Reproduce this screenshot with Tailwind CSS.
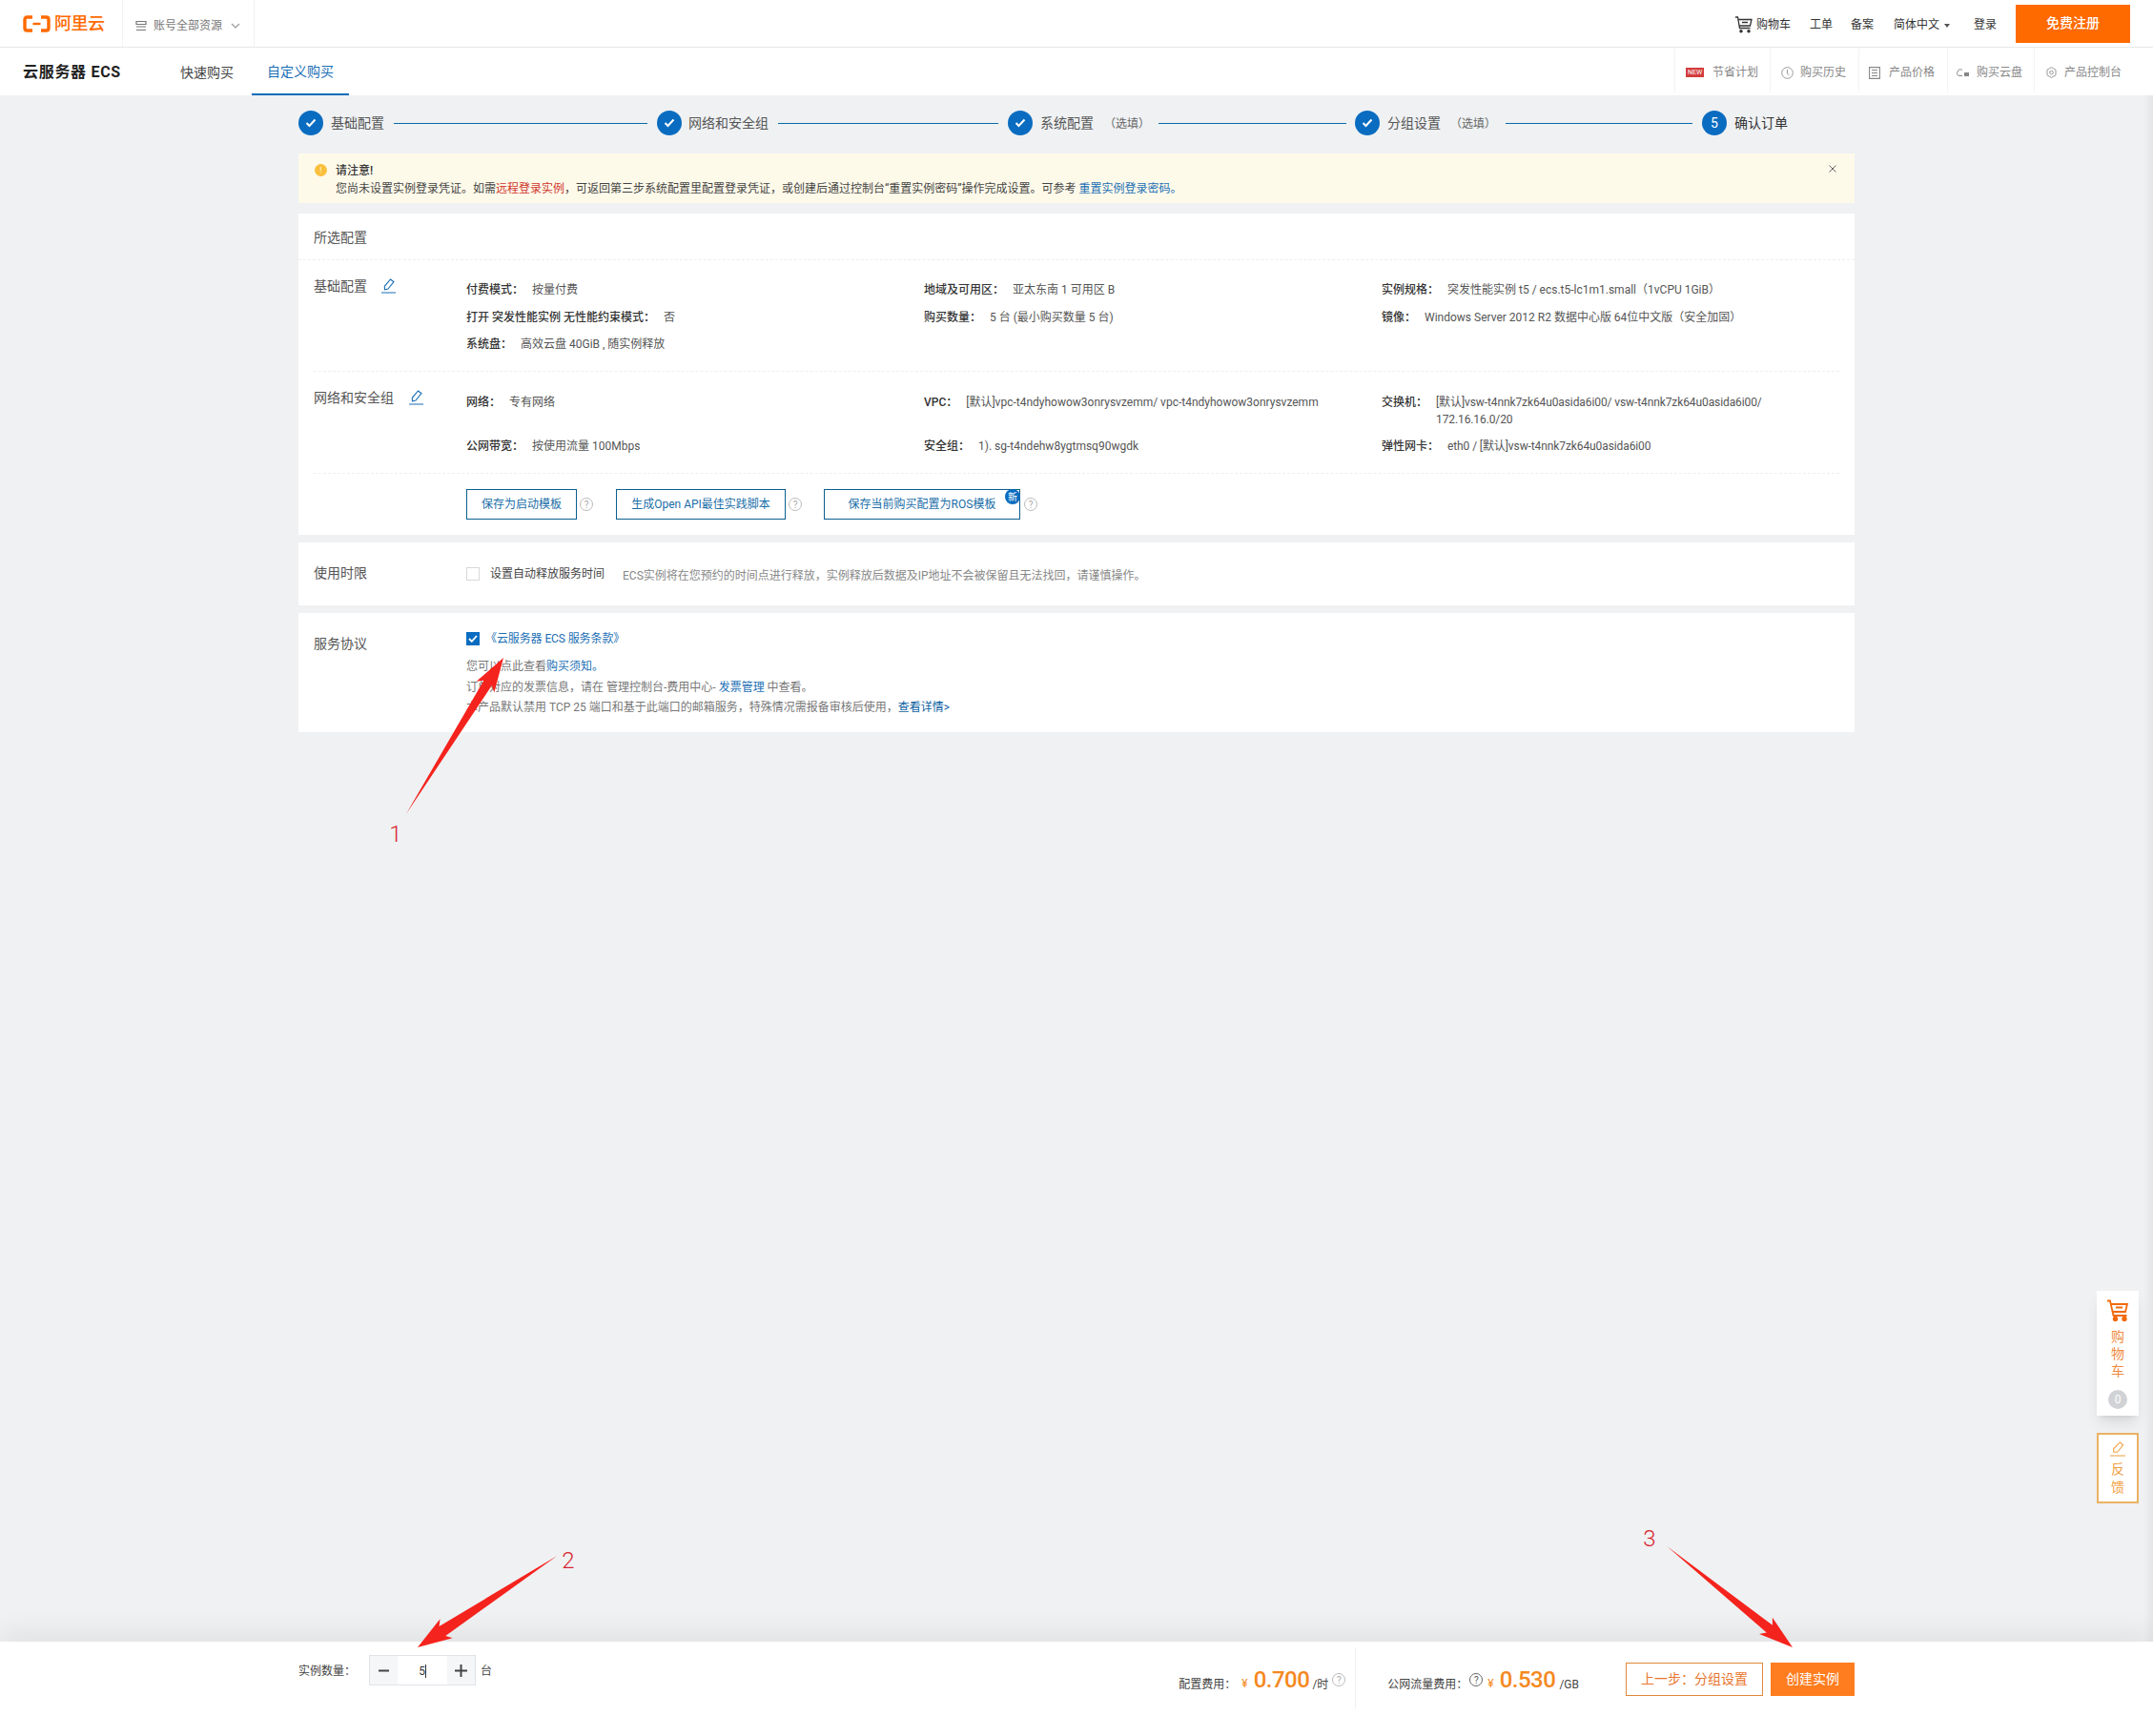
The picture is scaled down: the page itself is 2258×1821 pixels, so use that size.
<!DOCTYPE html>
<html lang="zh-CN">
<head>
    <meta charset="UTF-8">
    <title>云服务器 ECS - 确认订单</title>
    <script src="https://cdn.jsdelivr.net/npm/@tailwindcss/browser@4"></script>
</head>
<body class="relative flex h-[1821px] w-[2258px] flex-col overflow-hidden bg-[#eff1f3] font-['Roboto','Noto_Sans_CJK_SC',sans-serif] text-[12px] text-[#555]">

    <!-- Top bar -->
    <header class="flex h-[50px] shrink-0 items-stretch border-b border-[#e8e8e8] bg-white">
        <div class="flex w-[128px] items-center pl-[24px] text-[#ff6a00]">
            <svg class="h-[18px] w-[29px]" viewBox="0 0 29 18" fill="none" stroke="currentColor" stroke-width="3.4">
                <path d="M10 2H4.5Q2 2 2 4.5v9Q2 16 4.500 16H10"/>
                <path d="M19 2h5.500Q27 2 27 4.500v9Q27 16 24.500 16H19"/>
                <path d="M10.500 9h8" stroke-width="2.400"/>
            </svg>
            <span class="ml-[4px] text-[18px] leading-none font-medium tracking-[-0.5px] whitespace-nowrap">阿里云</span>
        </div>
        <div class="flex w-[139px] items-center border-x border-[#f2f2f2] pt-[4px] pl-[13px] text-[#777]">
            <svg class="h-[12px] w-[12px]" viewBox="0 0 12 12" fill="none" stroke="#777" stroke-width="1.200"><path d="M1 1.500h10v3H1zM1 7h10M1 10.500h10"/></svg>
            <span class="ml-[7px] whitespace-nowrap">账号全部资源</span>
            <svg class="ml-[9px] h-[6px] w-[10px]" viewBox="0 0 10 6" fill="none" stroke="#999" stroke-width="1.200"><path d="M1 1l4 4 4-4"/></svg>
        </div>
        <div class="ml-auto flex items-center pt-[2px] pr-[24px] text-[#333]">
            <svg class="h-[18px] w-[19px]" viewBox="0 0 19 18" fill="none" stroke="#333" stroke-width="1.300">
                <path d="M1 1h2.500l2 11.500h11M4 3.500h14l-1.500 6.500H5.200M8 6.500h6"/>
                <circle cx="7" cy="15.800" r="1.100" fill="#333"/><circle cx="15" cy="15.800" r="1.100" fill="#333"/>
            </svg>
            <span class="ml-[4px]">购物车</span>
            <span class="ml-[20px]">工单</span>
            <span class="ml-[19px]">备案</span>
            <span class="ml-[21px]">简体中文</span>
            <span class="mt-[2px] ml-[5px] h-0 w-0 border-x-[3px] border-t-[4px] border-x-transparent border-t-[#555]"></span>
            <span class="ml-[25px]">登录</span>
            <span class="mb-[2px] ml-[20px] flex h-[40px] w-[120px] items-center justify-center bg-[#ff6a00] text-[14px] font-medium text-white">免费注册</span>
        </div>
    </header>

    <!-- Product nav -->
    <nav class="flex h-[50px] shrink-0 items-stretch bg-white">
        <div class="flex w-[189px] items-center pt-[2px] pl-[24px] text-[16px] font-bold tracking-[0.7px] whitespace-nowrap text-[#222]">云服务器 ECS</div>
        <div class="flex items-center pt-[2px] text-[14px] text-[#444]">快速购买</div>
        <div class="ml-[19px] flex w-[102px] items-center justify-center border-b-2 border-[#0a6cb8] pt-[3px] text-[14px] text-[#1a6fb5]">自定义购买</div>
        <div class="mb-[3px] ml-auto flex items-stretch text-[#888]">
            <div class="flex w-[100px] items-center border-l border-[#f3f3f3] pt-[5px] pl-[11px]">
                <span class="flex h-[10px] w-[19px] items-center justify-center bg-[#d23c3c] text-[7px] leading-none text-white">NEW</span>
                <span class="ml-[9px]">节省计划</span>
            </div>
            <div class="flex w-[93px] items-center border-l border-[#f3f3f3] pt-[5px] pl-[11px]">
                <svg class="h-[13px] w-[13px]" viewBox="0 0 13 13" fill="none" stroke="#999"><circle cx="6.500" cy="6.500" r="5.800"/><path d="M6.500 3v4l2 2"/></svg>
                <span class="ml-[7px]">购买历史</span>
            </div>
            <div class="flex w-[93px] items-center border-l border-[#f3f3f3] pt-[5px] pl-[10px]">
                <svg class="h-[13px] w-[12px]" viewBox="0 0 12 13" fill="none" stroke="#888" stroke-width="1.100"><path d="M.600.600h10.800v11.800H.600zM3 3.500h6M3 6.500h6M3 9.500h6"/></svg>
                <span class="ml-[9px]">产品价格</span>
            </div>
            <div class="flex w-[91px] items-center border-l border-[#f3f3f3] pt-[5px] pl-[9px]">
                <svg class="h-[10px] w-[13px]" viewBox="0 0 13 10" fill="none" stroke="#888"><path d="M6 2.500A3 3 0 0 0 1 4.500 2.500 2.500 0 0 0 3 8.500h3"/><path d="M8 5h5v4H8z" fill="#888" stroke="none"/></svg>
                <span class="ml-[8px]">购买云盘</span>
            </div>
            <div class="flex w-[125px] items-center border-l border-[#f3f3f3] pt-[5px] pl-[12px]">
                <svg class="h-[12px] w-[11px]" viewBox="0 0 11 12" fill="none" stroke="#999"><path d="M5.500.600l4.500 2.600v5.600l-4.500 2.600L1 8.800V3.200z"/><circle cx="5.500" cy="6" r="1.800"/></svg>
                <span class="ml-[8px]">产品控制台</span>
            </div>
        </div>
    </nav>

    <!-- Main column -->
    <main class="relative flex-1">
        <div class="absolute inset-y-0 right-0 w-[10px] bg-linear-to-r from-transparent to-black/5"></div>
        <div class="ml-[313px] w-[1632px]">

            <!-- Steps -->
            <div class="mt-[16px] flex h-[26px] items-center text-[14px] text-[#555]">
                <span class="flex h-[26px] w-[26px] shrink-0 items-center justify-center rounded-full bg-[#0a6cc0]"><svg class="h-[10px] w-[12px]" viewBox="0 0 12 10" fill="none" stroke="white" stroke-width="2"><path d="M1.500 5l3 3 6-6.500"/></svg></span>
                <span class="ml-[8px] whitespace-nowrap">基础配置</span>
                <span class="ml-[10px] h-px w-[266px] bg-[#0b6aa8]"></span>
                <span class="ml-[10px] flex h-[26px] w-[26px] shrink-0 items-center justify-center rounded-full bg-[#0a6cc0]"><svg class="h-[10px] w-[12px]" viewBox="0 0 12 10" fill="none" stroke="white" stroke-width="2"><path d="M1.500 5l3 3 6-6.500"/></svg></span>
                <span class="ml-[7px] whitespace-nowrap">网络和安全组</span>
                <span class="ml-[10px] h-px w-[231px] bg-[#0b6aa8]"></span>
                <span class="ml-[10px] flex h-[26px] w-[26px] shrink-0 items-center justify-center rounded-full bg-[#0a6cc0]"><svg class="h-[10px] w-[12px]" viewBox="0 0 12 10" fill="none" stroke="white" stroke-width="2"><path d="M1.500 5l3 3 6-6.500"/></svg></span>
                <span class="ml-[8px] whitespace-nowrap">系统配置</span>
                <span class="mt-[2px] ml-[11px] text-[12px] whitespace-nowrap text-[#666]">（选填）</span>
                <span class="ml-[9px] h-px w-[197px] bg-[#0b6aa8]"></span>
                <span class="ml-[9px] flex h-[26px] w-[26px] shrink-0 items-center justify-center rounded-full bg-[#0a6cc0]"><svg class="h-[10px] w-[12px]" viewBox="0 0 12 10" fill="none" stroke="white" stroke-width="2"><path d="M1.500 5l3 3 6-6.500"/></svg></span>
                <span class="ml-[8px] whitespace-nowrap">分组设置</span>
                <span class="mt-[2px] ml-[10px] text-[12px] whitespace-nowrap text-[#666]">（选填）</span>
                <span class="ml-[10px] h-px w-[196px] bg-[#0b6aa8]"></span>
                <span class="ml-[10px] flex h-[26px] w-[26px] shrink-0 items-center justify-center rounded-full bg-[#0a6cc0] text-[14px] text-white">5</span>
                <span class="ml-[8px] whitespace-nowrap text-[#333]">确认订单</span>
            </div>

            <!-- Notice -->
            <div class="relative mt-[19px] h-[52px] bg-[#fefaea] pt-[9px] pl-[39px] leading-[18px] text-[#444]">
                <span class="absolute top-[11px] left-[17px] flex h-[13px] w-[13px] items-center justify-center rounded-full bg-[#fabf3c] text-[9px] text-[#fff3d0]">!</span>
                <svg class="absolute top-[12px] right-[19px] h-[8px] w-[8px]" viewBox="0 0 8 8" fill="none" stroke="#666"><path d="M.5.5l7 7M7.500.5l-7 7"/></svg>
                <div class="font-medium text-[#333]">请注意!</div>
                <div class="mt-px">您尚未设置实例登录凭证。如需<span class="text-[#d0342c]">远程登录实例</span>，可返回第三步系统配置里配置登录凭证，或创建后通过控制台“重置实例密码”操作完成设置。可参考 <span class="text-[#1a6fb5]">重置实例登录密码。</span></div>
            </div>

            <!-- Selected config -->
            <section class="mt-[11px] h-[337px] bg-white">
                <div class="flex h-[49px] items-center border-b border-dashed border-[#eee] pt-[2px] pl-[16px] text-[14px] text-[#555]">所选配置</div>
                <div class="px-[16px]">
                    <div class="flex border-b border-dashed border-[#eee] pt-[21px] pb-[18px]">
                        <div class="-mt-[4px] flex h-[20px] w-[160px] items-center text-[14px]">基础配置
                            <svg class="ml-[15px] h-[16px] w-[15px]" viewBox="0 0 15 16" fill="none" stroke="#1a6fb5" stroke-width="1.100"><path d="M9.500 1l3.500 2.700-6 7.300-3.500.8-.2-3.500zM0 15h15"/></svg>
                        </div>
                        <div class="grid w-[1440px] grid-cols-3 gap-y-[8.500px] leading-[20px]">
                            <div><b class="font-medium text-[#333]">付费模式：</b><span class="ml-[9px]">按量付费</span></div>
                            <div><b class="font-medium text-[#333]">地域及可用区：</b><span class="ml-[9px]">亚太东南 1 可用区 B</span></div>
                            <div><b class="font-medium text-[#333]">实例规格：</b><span class="ml-[9px]">突发性能实例 t5 / ecs.t5-lc1m1.small（1vCPU 1GiB）</span></div>
                            <div><b class="font-medium text-[#333]">打开 突发性能实例 无性能约束模式：</b><span class="ml-[9px]">否</span></div>
                            <div><b class="font-medium text-[#333]">购买数量：</b><span class="ml-[9px]">5 台 (最小购买数量 5 台)</span></div>
                            <div><b class="font-medium text-[#333]">镜像：</b><span class="ml-[9px]">Windows Server 2012 R2 数据中心版 64位中文版（安全加固）</span></div>
                            <div class="col-span-3"><b class="font-medium text-[#333]">系统盘：</b><span class="ml-[9px]">高效云盘 40GiB , 随实例释放</span></div>
                        </div>
                    </div>
                    <div class="flex border-b border-dashed border-[#eee] pt-[22px] pb-[18px]">
                        <div class="-mt-[5px] flex h-[20px] w-[160px] items-center text-[14px]">网络和安全组
                            <svg class="ml-[16px] h-[16px] w-[15px]" viewBox="0 0 15 16" fill="none" stroke="#1a6fb5" stroke-width="1.100"><path d="M9.500 1l3.500 2.700-6 7.300-3.500.8-.2-3.500zM0 15h15"/></svg>
                        </div>
                        <div class="grid w-[1440px] grid-cols-3 grid-rows-[46px_20px] leading-[20px]">
                            <div><b class="font-medium text-[#333]">网络：</b><span class="ml-[9px]">专有网络</span></div>
                            <div><b class="font-medium text-[#333]">VPC：</b><span class="ml-[9px]">[默认]vpc-t4ndyhowow3onrysvzemm/ vpc-t4ndyhowow3onrysvzemm</span></div>
                            <div class="flex"><b class="shrink-0 font-medium text-[#333]">交换机：</b><span class="ml-[9px] w-[370px] pt-px leading-[18px] tracking-[-0.1px] break-words">[默认]vsw-t4nnk7zk64u0asida6i00/ vsw-t4nnk7zk64u0asida6i00/ 172.16.16.0/20</span></div>
                            <div><b class="font-medium text-[#333]">公网带宽：</b><span class="ml-[9px]">按使用流量 100Mbps</span></div>
                            <div><b class="font-medium text-[#333]">安全组：</b><span class="ml-[9px]">1). sg-t4ndehw8ygtmsq90wgdk</span></div>
                            <div><b class="font-medium text-[#333]">弹性网卡：</b><span class="ml-[9px] tracking-[-0.1px]">eth0 / [默认]vsw-t4nnk7zk64u0asida6i00</span></div>
                        </div>
                    </div>
                    <div class="flex items-center pt-[16px] pl-[160px] text-[#1a6ea8]">
                        <span class="flex h-[32px] w-[116px] items-center justify-center border border-[#0a5f8f]">保存为启动模板</span>
                        <span class="ml-[3px] flex h-[14px] w-[14px] items-center justify-center rounded-full border border-[#bbb] text-[10px] text-[#aaa]">?</span>
                        <span class="ml-[24px] flex h-[32px] w-[178px] items-center justify-center border border-[#0a5f8f]">生成Open API最佳实践脚本</span>
                        <span class="ml-[3px] flex h-[14px] w-[14px] items-center justify-center rounded-full border border-[#bbb] text-[10px] text-[#aaa]">?</span>
                        <span class="relative ml-[23px] flex h-[32px] w-[206px] items-center justify-center border border-[#0a5f8f]">保存当前购买配置为ROS模板
                            <span class="absolute -top-px -right-px flex h-[16px] w-[16px] items-center justify-center rounded-full bg-[#0a6cc0] text-[10px] text-white">新</span>
                        </span>
                        <span class="ml-[4px] flex h-[14px] w-[14px] items-center justify-center rounded-full border border-[#bbb] text-[10px] text-[#aaa]">?</span>
                    </div>
                </div>
            </section>

            <!-- Release time -->
            <section class="mt-[8px] flex h-[66px] items-center bg-white pb-[1px] pl-[16px]">
                <span class="w-[160px] text-[14px]">使用时限</span>
                <span class="h-[14px] w-[14px] border border-[#d8d8d8] bg-white"></span>
                <span class="ml-[11px] whitespace-nowrap text-[#444]">设置自动释放服务时间</span>
                <span class="mt-[5px] ml-[19px] whitespace-nowrap text-[#888]">ECS实例将在您预约的时间点进行释放，实例释放后数据及IP地址不会被保留且无法找回，请谨慎操作。</span>
            </section>

            <!-- Agreement -->
            <section class="mt-[8px] flex h-[125px] bg-white pl-[16px]">
                <span class="w-[160px] pt-[22px] text-[14px] leading-[20px]">服务协议</span>
                <div class="pt-[17px] leading-[20px] text-[#777]">
                    <div class="flex h-[20px] items-center">
                        <span class="flex h-[14px] w-[14px] items-center justify-center bg-[#0a6cc0]"><svg class="h-[8px] w-[10px]" viewBox="0 0 10 8" fill="none" stroke="white" stroke-width="1.800"><path d="M1 4l2.800 2.800L9 1"/></svg></span>
                        <span class="ml-[6px] tracking-[-0.1px] text-[#1a6fb5]">《云服务器 ECS 服务条款》</span>
                    </div>
                    <div class="mt-[9px]">您可以点此查看<span class="text-[#1a6fb5]">购买须知。</span></div>
                    <div class="mt-[1.500px]">订单对应的发票信息，请在 管理控制台-费用中心-<span class="ml-[3px] text-[#1a6fb5]">发票管理</span> 中查看。</div>
                    <div class="mt-[1.500px]">本产品默认禁用 TCP 25 端口和基于此端口的邮箱服务，特殊情况需报备审核后使用，<span class="text-[#0a5f9f]">查看详情&gt;</span></div>
                </div>
            </section>
        </div>

        <!-- Floating cart / feedback -->
        <div class="absolute top-[1254px] left-[2199px] flex h-[131px] w-[44px] flex-col items-center bg-white pt-[9px] text-[14px] leading-[18px] text-[#f08a3c] shadow-lg">
            <svg class="h-[24px] w-[24px]" viewBox="0 0 24 24" fill="none" stroke="#f26a0c" stroke-width="1.800">
                <path d="M1 1.500h3l3.500 15.500h14M5 5h17l-2 8H7M10 8.500h7"/>
                <circle cx="9.500" cy="20.500" r="1.800" fill="#f26a0c"/><circle cx="19" cy="20.500" r="1.800" fill="#f26a0c"/>
            </svg>
            <span class="mt-[6px]">购</span><span>物</span><span>车</span>
            <span class="mt-[11px] flex h-[20px] w-[20px] items-center justify-center rounded-full bg-[#d0d2d5] text-[12px] text-white">0</span>
        </div>
        <div class="absolute top-[1403px] left-[2199px] flex h-[74px] w-[44px] flex-col items-center border-2 border-[#eab264] bg-white pt-[7px] text-[14px] leading-[19px] text-[#f0a040]">
            <svg class="h-[16px] w-[16px]" viewBox="0 0 17 17" fill="none" stroke="#f0a040" stroke-width="1.100"><path d="M11 1l3.500 3-6.500 8H4l-.2-3.700zM0 16h17"/></svg>
            <span class="mt-[4px]">反</span><span>馈</span>
        </div>
    </main>

    <!-- Bottom bar -->
    <footer class="relative h-[99px] shrink-0 bg-white shadow-[0_-14px_22px_rgba(0,0,0,0.05)]">
        <div class="ml-[313px] flex w-[1632px] items-start">
            <div class="mt-[14px] flex h-[32px] items-center text-[#444]">
                <span class="w-[74px] pt-[2px] whitespace-nowrap">实例数量：</span>
                <div class="flex h-[32px] w-[112px] items-stretch border border-[#dfe3e8] text-[#333]">
                    <span class="flex w-[29px] items-center justify-center bg-[#f4f6f8]"><svg class="h-[11px] w-[11px]" viewBox="0 0 11 11" stroke="#444" stroke-width="2"><path d="M0 5.500h11"/></svg></span>
                    <span class="flex flex-1 items-center justify-center pt-px">5<span class="h-[14px] w-px bg-[#333]"></span></span>
                    <span class="flex w-[29px] items-center justify-center bg-[#f4f6f8]"><svg class="h-[13px] w-[13px]" viewBox="0 0 13 13" stroke="#444" stroke-width="2"><path d="M0 6.500h13M6.500 0v13"/></svg></span>
                </div>
                <span class="ml-[5px] pt-[2px]">台</span>
            </div>
            <div class="mt-[6px] ml-auto flex h-[64px] items-center text-[#444]">
                <div class="flex items-baseline pt-[4px]">
                    <span class="translate-y-px whitespace-nowrap">配置费用：</span>
                    <span class="ml-[6px] text-[#f5891f]">¥</span>
                    <span class="ml-[6px] text-[24px] font-medium tracking-[-0.5px] text-[#f5891f]">0.700</span>
                    <span class="ml-[3px] translate-y-px">/时</span>
                    <span class="ml-[4px] flex h-[14px] w-[14px] items-center justify-center self-center rounded-full border border-[#bbb] text-[10px] text-[#aaa]">?</span>
                </div>
                <span class="ml-[10px] h-[64px] w-px bg-[#f0f0f0]"></span>
                <div class="ml-[33px] flex items-baseline pt-[4px]">
                    <span class="translate-y-px whitespace-nowrap">公网流量费用：</span>
                    <span class="ml-[2px] flex h-[14px] w-[14px] items-center justify-center self-center rounded-full border border-[#666] text-[10px] text-[#555]">?</span>
                    <span class="ml-[5px] text-[#f5891f]">¥</span>
                    <span class="ml-[6px] text-[24px] font-medium tracking-[-0.5px] text-[#f5891f]">0.530</span>
                    <span class="ml-[4px] translate-y-px">/GB</span>
                </div>
                <span class="mt-[3px] ml-[49px] flex h-[35px] w-[144px] items-center justify-center border border-[#e0873a] text-[14px] whitespace-nowrap text-[#e9742b]">上一步：分组设置</span>
                <span class="mt-[3px] ml-[8px] flex h-[35px] w-[88px] items-center justify-center bg-[#ff7d1f] text-[14px] text-white">创建实例</span>
            </div>
        </div>
    </footer>

    <!-- Red annotation arrows drawn over the screenshot -->
    <svg class="pointer-events-none absolute top-0 left-0 h-[1821px] w-[2258px]" viewBox="0 0 2258 1821">
        <g fill="#f5231d">
            <polygon transform="translate(528 690) rotate(-58.100)" points="0,0 -36,-11 -31,-5 -193,0 -31,5 -36,11"/>
            <polygon transform="translate(438 1728) rotate(146.700)" points="0,0 -36,-12 -31,-6 -175,0 -31,6 -36,12"/>
            <polygon transform="translate(1880 1728) rotate(38.800)" points="0,0 -36,-11 -31,-5 -169,0 -31,5 -36,11"/>
        </g>
        <g fill="#d9252e" font-size="24" font-family="Roboto, sans-serif" font-weight="300" text-anchor="middle">
            <text x="415" y="883">1</text>
            <text x="596" y="1645">2</text>
            <text x="1730" y="1622">3</text>
        </g>
    </svg>
</body>
</html>
